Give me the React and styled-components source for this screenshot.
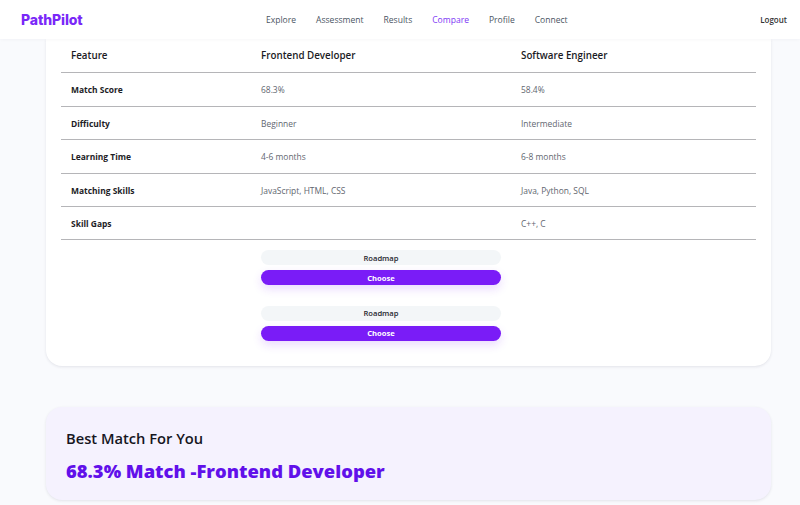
import React from "react";
import styled, { createGlobalStyle } from "styled-components";

const Global = createGlobalStyle`
  html, body { margin: 0; padding: 0; height: 505px; overflow: hidden; background: #f9fafd; }
  body { font-family: "Open Sans", "Noto Sans", sans-serif; }
  * { box-sizing: border-box; }
`;

const Page = styled.div`
  width: 800px;
  height: 505px;
  overflow: hidden;
  background: #f9fafd;
`;

const Header = styled.header`
  position: relative;
  z-index: 2;
  height: 39px;
  background: #fff;
  padding: 0 13px 0 21px;
  display: grid;
  grid-template-columns: 245px 1fr auto;
  align-items: center;
  box-shadow: 0 1px 3px rgba(30, 30, 60, 0.03);
`;

const Logo = styled.div`
  font-family: Inter, sans-serif;
  font-weight: 800;
  font-size: 14px;
  color: #7a28f8;
  letter-spacing: -0.1px;
`;

const Nav = styled.nav`
  display: flex;
  gap: 20px;
`;

const NavLink = styled.a`
  font-size: 8.55px;
  color: ${(p) => (p.$active ? "#7c35f5" : "#4b5563")};
`;

const Logout = styled.button`
  justify-self: end;
  border: 0;
  background: none;
  padding: 0;
  font: 600 8px "Open Sans", sans-serif;
  color: #333;
`;

const Main = styled.main`
  padding: 0 29px 0 46px;
`;

const Card = styled.section`
  background: #fff;
  border-radius: 0 0 16px 16px;
  height: 327px;
  padding: 0 15px;
  box-shadow: 0 1px 3px rgba(30, 30, 60, 0.1);
`;

const Table = styled.table`
  width: 695px;
  border-collapse: collapse;
  table-layout: fixed;
`;

const Th = styled.th`
  height: 33.9px;
  padding: 0 10px;
  text-align: left;
  font-size: 9.8px;
  font-weight: 600;
  color: #1b1b24;
  border-bottom: 1px solid #b5b5b8;
`;

const Label = styled.td`
  height: 33.4px;
  padding: 0.6px 10px 0;
  font-size: 8.45px;
  font-weight: 700;
  color: #1d1d26;
  border-bottom: 1px solid #b5b5b8;
`;

const Td = styled.td`
  height: 33.4px;
  padding: 0.6px 10px 0;
  font-size: 8.45px;
  color: #62666f;
  border-bottom: 1px solid #b5b5b8;
`;

const ActionCell = styled.td`
  padding: 10px 10px 0;
  vertical-align: top;
`;

const ActionGroup = styled.div`
  display: flex;
  flex-direction: column;
  gap: 5px;
  margin-bottom: 20.5px;
`;

const Pill = styled.button`
  height: 15px;
  width: 100%;
  border: 0;
  padding: 0;
  border-radius: 8px;
  font: 600 7.6px "Open Sans", sans-serif;
  background: ${(p) => (p.$primary ? "#7a1cf7" : "#f3f6f8")};
  color: ${(p) => (p.$primary ? "#fff" : "#26262e")};
  font-weight: ${(p) => (p.$primary ? 700 : 600)};
  box-shadow: ${(p) => (p.$primary ? "0 4px 10px rgba(122, 28, 247, 0.16)" : "none")};
`;

const BestCard = styled.section`
  margin-top: 41px;
  height: 93px;
  border-radius: 16px;
  background: #f5f2fe;
  padding: 21px 20px 0;
  box-shadow: 0 1px 3px rgba(30, 30, 60, 0.1);
`;

const BestTitle = styled.h2`
  margin: 0;
  font-size: 14.7px;
  line-height: 20px;
  font-weight: 600;
  color: #16161e;
`;

const BestValue = styled.h3`
  margin: 10px 0 0;
  font-size: 18.4px;
  line-height: 26px;
  font-weight: 800;
  color: #6110ea;
`;

const rows = [
  ["Match Score", "68.3%", "58.4%"],
  ["Difficulty", "Beginner", "Intermediate"],
  ["Learning Time", "4-6 months", "6-8 months"],
  ["Matching Skills", "JavaScript, HTML, CSS", "Java, Python, SQL"],
  ["Skill Gaps", "", "C++, C"],
];

export default function App() {
  return (
    <Page>
      <Global />
      <Header>
        <Logo>PathPilot</Logo>
        <Nav>
          {["Explore", "Assessment", "Results", "Compare", "Profile", "Connect"].map((n) => (
            <NavLink key={n} $active={n === "Compare"}>{n}</NavLink>
          ))}
        </Nav>
        <Logout>Logout</Logout>
      </Header>
      <Main>
        <Card>
          <Table>
            <colgroup>
              <col style={{ width: 190 }} />
              <col style={{ width: 260 }} />
              <col style={{ width: 245 }} />
            </colgroup>
            <thead>
              <tr>
                <Th>Feature</Th>
                <Th>Frontend Developer</Th>
                <Th>Software Engineer</Th>
              </tr>
            </thead>
            <tbody>
              {rows.map(([a, b, c]) => (
                <tr key={a}>
                  <Label>{a}</Label>
                  <Td>{b}</Td>
                  <Td>{c}</Td>
                </tr>
              ))}
              <tr>
                <td />
                <ActionCell>
                  {[0, 1].map((i) => (
                    <ActionGroup key={i}>
                      <Pill>Roadmap</Pill>
                      <Pill $primary>Choose</Pill>
                    </ActionGroup>
                  ))}
                </ActionCell>
                <td />
              </tr>
            </tbody>
          </Table>
        </Card>
        <BestCard>
          <BestTitle>Best Match For You</BestTitle>
          <BestValue>68.3% Match -Frontend Developer</BestValue>
        </BestCard>
      </Main>
    </Page>
  );
}
